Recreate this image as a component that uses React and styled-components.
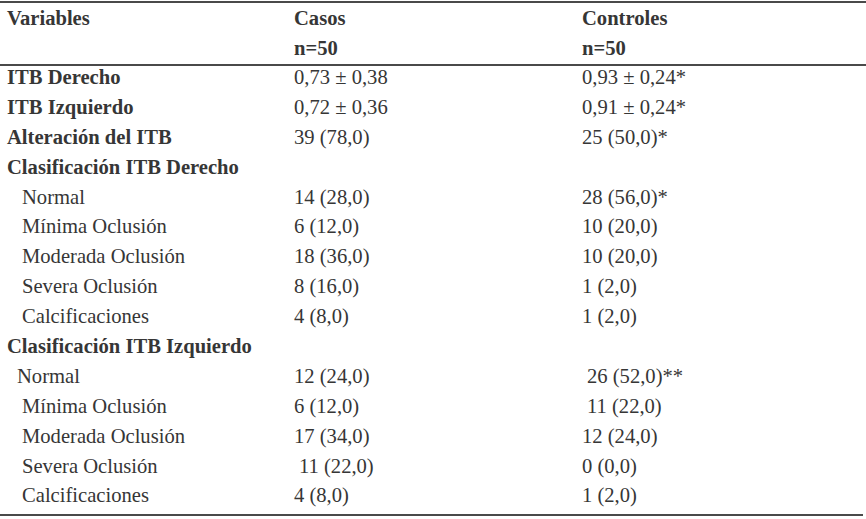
import React from "react";
import styled, { createGlobalStyle } from "styled-components";

const Global = createGlobalStyle`
  html, body { margin: 0; padding: 0; background: #ffffff; }
`;

const Table = styled.div`
  width: 866px;
  padding-top: 1px;
  font-family: "Liberation Serif", "Times New Roman", serif;
  font-size: 20.6px;
  color: #363636;
`;

const Head = styled.div`
  border-top: 2px solid #4a4a4a;
  border-bottom: 2px solid #4a4a4a;
  padding-top: 4px;
`;

const Body = styled.div`
  width: 863px;
  border-bottom: 2px solid #4a4a4a;
`;

const Row = styled.div`
  display: grid;
  grid-template-columns: 287px 288px 1fr;
  padding-left: 7px;
  height: ${(p) => p.$h || 29.9}px;
  line-height: 22px;
  white-space: pre;
`;

const Cell = styled.div`
  font-family: "Liberation Serif", "Times New Roman", serif;
  font-weight: ${(p) => (p.$bold ? 700 : 400)};
  padding-left: ${(p) => p.$indent || 0}px;
`;

const rows = [
  { label: "ITB Derecho", bold: true, a: "0,73 ± 0,38", b: "0,93 ± 0,24*" },
  { label: "ITB Izquierdo", bold: true, a: "0,72 ± 0,36", b: "0,91 ± 0,24*" },
  { label: "Alteración del ITB", bold: true, a: "39 (78,0)", b: "25 (50,0)*" },
  { label: "Clasificación ITB Derecho", bold: true, a: "", b: "" },
  { label: "Normal", indent: 15, a: "14 (28,0)", b: "28 (56,0)*" },
  { label: "Mínima Oclusión", indent: 15, a: "6 (12,0)", b: "10 (20,0)" },
  { label: "Moderada Oclusión", indent: 15, a: "18 (36,0)", b: "10 (20,0)" },
  { label: "Severa Oclusión", indent: 15, a: "8 (16,0)", b: "1 (2,0)" },
  { label: "Calcificaciones", indent: 15, a: "4 (8,0)", b: "1 (2,0)" },
  { label: "Clasificación ITB Izquierdo", bold: true, a: "", b: "" },
  { label: "Normal", indent: 10, a: "12 (24,0)", b: "26 (52,0)**", bShift: 5 },
  { label: "Mínima Oclusión", indent: 15, a: "6 (12,0)", b: "11 (22,0)", bShift: 5 },
  { label: "Moderada Oclusión", indent: 15, a: "17 (34,0)", b: "12 (24,0)" },
  { label: "Severa Oclusión", indent: 15, a: "11 (22,0)", aShift: 5, b: "0 (0,0)" },
  { label: "Calcificaciones", indent: 15, a: "4 (8,0)", b: "1 (2,0)" },
];

export default function App() {
  return (
    <>
      <Global />
      <Table>
        <Head>
          <Row $h={30}>
            <Cell $bold>Variables</Cell>
            <Cell $bold>Casos</Cell>
            <Cell $bold>Controles</Cell>
          </Row>
          <Row $h={27}>
            <Cell />
            <Cell $bold>n=50</Cell>
            <Cell $bold>n=50</Cell>
          </Row>
        </Head>
        <Body>
          {rows.map((r, i) => (
            <Row key={i}>
              <Cell $bold={r.bold} $indent={r.indent}>{r.label}</Cell>
              <Cell $indent={r.aShift}>{r.a}</Cell>
              <Cell $indent={r.bShift}>{r.b}</Cell>
            </Row>
          ))}
        </Body>
      </Table>
    </>
  );
}
